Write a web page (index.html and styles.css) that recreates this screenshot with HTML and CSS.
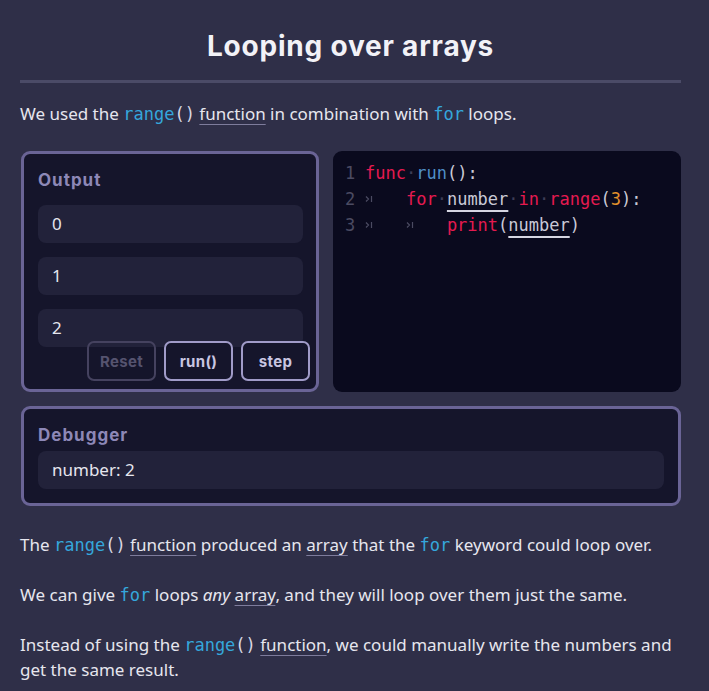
FILE: index.html
```html
<!DOCTYPE html>
<html lang="en">
<head>
<meta charset="utf-8">
<title>Looping over arrays</title>
<link rel="stylesheet" href="styles.css">
</head>
<body>
<main class="page">
  <h1 class="title">Looping over arrays</h1>
  <hr class="rule">
  <p class="para">We used the <code class="ic"><span class="ic-fn">range</span>()</code> <span class="link">function</span> in combination with <code class="ic"><span class="ic-fn">for</span></code> loops.</p>

  <div class="demo">
    <section class="panel output">
      <h2 class="label">Output</h2>
      <div class="rows">
        <div class="row">0</div>
        <div class="row">1</div>
        <div class="row">2</div>
      </div>
      <div class="buttons">
        <button class="btn btn-dim">Reset</button>
        <button class="btn">run()</button>
        <button class="btn">step</button>
      </div>
    </section>
    <div class="code">
      <div class="line"><span class="ln">1</span><span class="kw">func</span><span class="dot">·</span><span class="fn">run</span><span class="pn">():</span></div>
      <div class="line"><span class="ln">2</span><span class="tab"><svg class="tabmark" viewBox="0 0 8 8" width="8" height="8"><path d="M1 1.5 L3.5 4 L1 6.5 M6.5 1 V7" fill="none" stroke="currentColor" stroke-width="1.2"/></svg></span><span class="kw">for</span><span class="dot">·</span><span class="var">number</span><span class="dot">·</span><span class="kw">in</span><span class="dot">·</span><span class="kw">range</span><span class="pn">(</span><span class="num">3</span><span class="pn">):</span></div>
      <div class="line"><span class="ln">3</span><span class="tab"><svg class="tabmark" viewBox="0 0 8 8" width="8" height="8"><path d="M1 1.5 L3.5 4 L1 6.5 M6.5 1 V7" fill="none" stroke="currentColor" stroke-width="1.2"/></svg></span><span class="tab"><svg class="tabmark" viewBox="0 0 8 8" width="8" height="8"><path d="M1 1.5 L3.5 4 L1 6.5 M6.5 1 V7" fill="none" stroke="currentColor" stroke-width="1.2"/></svg></span><span class="kw">print</span><span class="pn">(</span><span class="var">number</span><span class="pn">)</span></div>
    </div>
  </div>

  <section class="panel debugger">
    <h2 class="label">Debugger</h2>
    <div class="row">number: 2</div>
  </section>

  <p class="para para-after">The <code class="ic"><span class="ic-fn">range</span>()</code> <span class="link">function</span> produced an <span class="link">array</span> that the <code class="ic"><span class="ic-fn">for</span></code> keyword could loop over.</p>
  <p class="para">We can give <code class="ic"><span class="ic-fn">for</span></code> loops <em>any</em> <span class="link">array</span>, and they will loop over them just the same.</p>
  <p class="para">Instead of using the <code class="ic"><span class="ic-fn">range</span>()</code> <span class="link">function</span>, we could manually write the numbers and get the same result.</p>
</main>
</body>
</html>
```

FILE: styles.css
```css
* { box-sizing: border-box; }
html, body { margin: 0; padding: 0; }
body {
  background: #2f2f48;
  color: #e6e6ee;
  font-family: "Noto Sans", "Open Sans", sans-serif;
  font-size: 17px;
}
.page {
  width: 661px;
  margin-left: 20px;
  padding-top: 26px;
}
.title {
  margin: 0;
  text-align: center;
  font-family: Inter, "Noto Sans", sans-serif;
  font-weight: 700;
  font-size: 28px;
  letter-spacing: 0.8px;
  line-height: 40px;
  color: #f2f2f7;
}
.rule {
  margin: 14px 0 0;
  border: 0;
  height: 3px;
  background: #4b4b67;
}
.para {
  margin: 18px 0 0;
  line-height: 25px;
}
.para + .para { margin-top: 25px; }
.para.para-after { margin-top: 26px; }
.ic {
  font-family: "DejaVu Sans Mono", monospace;
  font-size: 17px;
  line-height: 1;
  color: #d8d8e4;
}
.ic-fn { color: #35a7dc; }
.link {
  text-decoration: underline;
  text-decoration-color: #7e7c9c;
  text-underline-offset: 4px;
  text-decoration-thickness: 1px;
}
em { font-style: italic; }

.demo {
  margin-top: 25px;
  display: grid;
  grid-template-columns: 298px 1fr;
  column-gap: 14px;
  padding-left: 1px;
}
.panel {
  background: #15152b;
  border: 3px solid #6a6496;
  border-radius: 9px;
  padding: 14px;
}
.output {
  position: relative;
  height: 241px;
  padding-right: 13px;
}
.label {
  margin: 0;
  font-family: Inter, "Noto Sans", sans-serif;
  font-weight: 700;
  font-size: 17px;
  letter-spacing: 1px;
  line-height: 24px;
  color: #8d88b7;
}
.rows {
  margin-top: 13px;
  display: flex;
  flex-direction: column;
  gap: 14px;
}
.row {
  background: #22223a;
  border-radius: 8px;
  height: 38px;
  line-height: 38px;
  padding: 0 14px;
  font-size: 17px;
}
.buttons {
  position: absolute;
  right: 6px;
  bottom: 8px;
  display: flex;
  gap: 8px;
}
.btn {
  width: 69px;
  height: 40px;
  background: #15152b;
  border: 2px solid #a09bc8;
  border-radius: 7px;
  color: #c9c6e2;
  font-family: Inter, "Noto Sans", sans-serif;
  font-weight: 700;
  font-size: 15px;
  letter-spacing: 0.3px;
  padding: 0;
}
.btn-dim {
  border-color: #45425f;
  color: #55536f;
  background: transparent;
}

.code {
  background: #0a0a1e;
  border-radius: 9px;
  height: 241px;
  padding: 9px 12px;
  font-family: "DejaVu Sans Mono", monospace;
  font-size: 17px;
  color: #c9c9d6;
}
.line {
  height: 26px;
  line-height: 26px;
  white-space: pre;
}
.ln {
  display: inline-block;
  width: 20px;
  color: #4b4b62;
}
.kw { color: #e51a50; }
.fn { color: #4f8fc7; }
.pn { color: #c9c9d6; }
.num { color: #e3912c; }
.var {
  color: #c9c9d6;
  text-decoration: underline;
  text-decoration-color: #d6d6e2;
  text-decoration-thickness: 2px;
  text-underline-offset: 5px;
}
.dot { color: #3d3d56; }
.tab {
  display: inline-block;
  width: 4ch;
  color: #4b4b62;
}
.tabmark {
  display: inline-block;
  vertical-align: middle;
  margin-top: -3px;
}

.debugger {
  margin-top: 14px;
  margin-left: 1px;
  padding-top: 14px;
}
.debugger .label { margin-bottom: 4px; }
```
